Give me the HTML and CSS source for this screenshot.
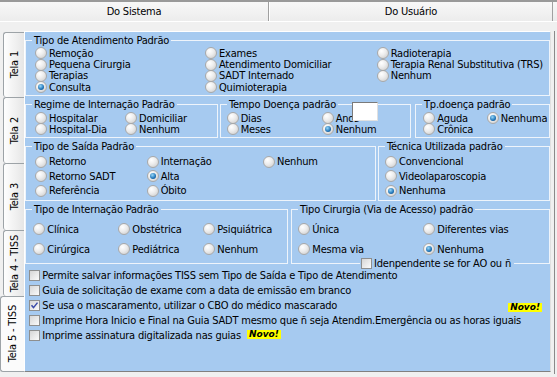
FILE: index.html
```html
<!DOCTYPE html>
<html lang="pt-BR">

<head>
  <meta charset="UTF-8">
  <title>Configurações Padrão</title>
  <link rel="stylesheet" href="styles.css">
</head>

<body>
  <div class="top-tabs">
    <div class="top-tab">Do Sistema</div>
    <div class="top-tab">Do Usuário</div>
  </div>

  <div class="main">
    <div class="side-tabs">
      <div class="side-tab tab1"><span>Tela 1</span></div>
      <div class="side-tab tab2"><span>Tela 2</span></div>
      <div class="side-tab tab3"><span>Tela 3</span></div>
      <div class="side-tab tab4"><span>Tela 4 - TISS</span></div>
      <div class="side-tab tab5 active"><span>Tela 5 - TISS</span></div>
    </div>

    <div class="panel">
      <fieldset class="group g-atend">
        <legend>Tipo de Atendimento Padrão</legend>
        <div class="opts">
          <span class="opt"><i class="radio"></i>Remoção</span>
          <span class="opt"><i class="radio"></i>Exames</span>
          <span class="opt"><i class="radio"></i>Radioterapia</span>
          <span class="opt"><i class="radio"></i>Pequena Cirurgia</span>
          <span class="opt"><i class="radio"></i>Atendimento Domiciliar</span>
          <span class="opt"><i class="radio"></i>Terapia Renal Substitutiva (TRS)</span>
          <span class="opt"><i class="radio"></i>Terapias</span>
          <span class="opt"><i class="radio"></i>SADT Internado</span>
          <span class="opt"><i class="radio"></i>Nenhum</span>
          <span class="opt"><i class="radio on"></i>Consulta</span>
          <span class="opt"><i class="radio"></i>Quimioterapia</span>
        </div>
      </fieldset>

      <div class="row r2">
        <fieldset class="group g-regime">
          <legend>Regime de Internação Padrão</legend>
          <div class="opts">
            <span class="opt"><i class="radio"></i>Hospitalar</span>
            <span class="opt"><i class="radio"></i>Domiciliar</span>
            <span class="opt"><i class="radio"></i>Hospital-Dia</span>
            <span class="opt"><i class="radio"></i>Nenhum</span>
          </div>
        </fieldset>
        <fieldset class="group g-tempo">
          <legend>Tempo Doença padrão</legend>
          <div class="opts">
            <span class="opt"><i class="radio"></i>Dias</span>
            <span class="opt"><i class="radio"></i>Anos</span>
            <span class="opt"><i class="radio"></i>Meses</span>
            <span class="opt"><i class="radio on"></i>Nenhum</span>
          </div>
          <div class="edit-box"></div>
        </fieldset>
        <fieldset class="group g-tpdoenca">
          <legend>Tp.doença padrão</legend>
          <div class="opts">
            <span class="opt"><i class="radio"></i>Aguda</span>
            <span class="opt"><i class="radio on"></i>Nenhuma</span>
            <span class="opt"><i class="radio"></i>Crônica</span>
          </div>
        </fieldset>
      </div>

      <div class="row r3">
        <fieldset class="group g-saida">
          <legend>Tipo de Saída Padrão</legend>
          <div class="opts">
            <span class="opt"><i class="radio"></i>Retorno</span>
            <span class="opt"><i class="radio"></i>Internação</span>
            <span class="opt"><i class="radio"></i>Nenhum</span>
            <span class="opt"><i class="radio"></i>Retorno SADT</span>
            <span class="opt"><i class="radio on"></i>Alta</span>
            <span></span>
            <span class="opt"><i class="radio"></i>Referência</span>
            <span class="opt"><i class="radio"></i>Óbito</span>
          </div>
        </fieldset>
        <fieldset class="group g-tecnica">
          <legend>Técnica Utilizada padrão</legend>
          <div class="opts">
            <span class="opt"><i class="radio"></i>Convencional</span>
            <span class="opt"><i class="radio"></i>Videolaparoscopia</span>
            <span class="opt"><i class="radio on"></i>Nenhuma</span>
          </div>
        </fieldset>
      </div>

      <div class="row r4">
        <fieldset class="group g-intern">
          <legend>Tipo de Internação Padrão</legend>
          <div class="opts">
            <span class="opt"><i class="radio"></i>Clínica</span>
            <span class="opt"><i class="radio"></i>Obstétrica</span>
            <span class="opt"><i class="radio"></i>Psiquiátrica</span>
            <span class="opt"><i class="radio"></i>Cirúrgica</span>
            <span class="opt"><i class="radio"></i>Pediátrica</span>
            <span class="opt"><i class="radio"></i>Nenhum</span>
          </div>
        </fieldset>
        <fieldset class="group g-cirurgia">
          <legend>Tipo Cirurgia (Via de Acesso) padrão</legend>
          <div class="opts">
            <span class="opt"><i class="radio"></i>Única</span>
            <span class="opt"><i class="radio"></i>Diferentes vias</span>
            <span class="opt"><i class="radio"></i>Mesma via</span>
            <span class="opt"><i class="radio on"></i>Nenhuma</span>
          </div>
          <span class="chk border-chk"><i class="box"></i>Idenpendente se for AO ou ñ</span>
        </fieldset>
      </div>

      <div class="checks">
        <span class="chk"><i class="box"></i>Permite salvar informações TISS sem Tipo de Saída e Tipo de Atendimento</span>
        <span class="chk"><i class="box"></i>Guia de solicitação de exame com a data de emissão em branco</span>
        <span class="chk"><i class="box"><svg viewBox="0 0 9 9"><path d="M1.5 4.2l2 2.4 4-5" fill="none" stroke="#3a4aa8" stroke-width="1.5"/></svg></i>Se usa o mascaramento, utilizar o CBO do médico mascarado<span class="novo novo-far">Novo!</span></span>
        <span class="chk"><i class="box"></i>Imprime Hora Inicio e Final na Guia SADT mesmo que ñ seja Atendim.Emergência ou as horas iguais</span>
        <span class="chk"><i class="box"></i>Imprime assinatura digitalizada nas guias<span class="novo novo-near">Novo!</span></span>
      </div>
    </div>

    <div class="edge"></div>
  </div>
</body>

</html>
```

FILE: styles.css
```css
body {
  margin: 0;
  width: 557px;
  height: 377px;
  overflow: hidden;
  background: #f0f0f0;
  font-family: "DejaVu Sans Condensed", "DejaVu Sans", sans-serif;
  font-size: 11px;
  letter-spacing: -0.2px;
  color: #000;
}

/* top tabs */
.top-tabs {
  display: flex;
  height: 22px;
  box-sizing: border-box;
  border-top: 2px solid #9a9a9a;
  border-bottom: 1px solid #fff;
  background: linear-gradient(#f8f8f8, #ececec);
}

.top-tab {
  display: flex;
  align-items: center;
  justify-content: center;
  width: 268px;
  border-right: 1px solid #a0a0a0;
}

.top-tab + .top-tab {
  width: 282px;
  border-left: 1px solid #fff;
}

/* vertical tabs */
.main {
  display: flex;
  height: 355px;
}

.side-tabs {
  width: 24px;
  padding-top: 10px;
  box-sizing: border-box;
  display: flex;
  flex-direction: column;
}

.side-tab {
  margin-left: 3px;
  display: flex;
  align-items: center;
  justify-content: center;
  box-sizing: border-box;
  border: 1px solid #9da3a7;
  border-right: none;
  border-bottom: none;
  border-radius: 3px 0 0 3px;
  background: linear-gradient(to right, #fefefe, #e6e6e6);
}

.side-tab span {
  writing-mode: vertical-rl;
  transform: rotate(180deg);
  white-space: nowrap;
}

.tab1 { height: 65px; }
.tab2 { height: 66px; }
.tab3 { height: 67px; }
.tab4 { height: 66px; }
.tab5 { height: 76px; }

.side-tab.active {
  margin-left: 0;
  background: #fbfbfb;
  border-bottom: 1px solid #9da3a7;
}

/* blue panel */
.panel {
  margin-top: 9px;
  width: 527px;
  height: 341px;
  box-sizing: border-box;
  border: 1px solid;
  border-color: #fff #e0e0e0 #808080 #fff;
  background: #a6caf0;
  display: flex;
  flex-direction: column;
}

.edge {
  margin-top: 9px;
  width: 3px;
  height: 343px;
  border-right: 1px solid #8a8a8a;
}

.row {
  display: flex;
  justify-content: space-between;
}

.group {
  position: relative;
  margin: 0;
  padding: 0;
  min-width: 0;
  box-sizing: border-box;
  border: 1px solid #eef4fb;
}

.group legend {
  margin-left: 6px;
  padding: 0 2px;
  line-height: 12px;
}

.opts {
  display: grid;
}

.opt {
  display: flex;
  align-items: center;
  gap: 2px;
  line-height: 11px;
  white-space: nowrap;
}

.radio {
  flex: none;
  position: relative;
  width: 12px;
  height: 12px;
  box-sizing: border-box;
  border-radius: 50%;
  border: 1px solid #a9a9a9;
  background: radial-gradient(circle at 35% 30%, #fff 0, #ececec 45%, #c8c8c8 100%);
}

.radio.on::after {
  content: "";
  position: absolute;
  left: 2px;
  top: 2px;
  width: 6px;
  height: 6px;
  border-radius: 50%;
  background: radial-gradient(circle at 40% 35%, #9ad8f8, #1f74b8 60%, #0c3d70);
}

/* group sizes */
.g-atend {
  margin-top: 2.5px;
  height: 61.5px;
}

.g-atend .opts {
  grid-template-columns: 170px 171.7px 1fr;
  grid-auto-rows: 11.33px;
  padding: 1.1px 0 0 9px;
}

.r2 {
  margin-top: 2.5px;
  height: 39.5px;
}

.r2 .opts {
  grid-auto-rows: 11px;
  padding-top: 2.3px;
}

.g-regime { width: 193px; }
.g-regime .opts { grid-template-columns: 90px 1fr; padding-left: 9px; }

.g-tempo { width: 191px; margin-left: 2px; }
.g-tempo .opts { grid-template-columns: 95px 1fr; padding-left: 5.7px; }

.g-tpdoenca { width: 135px; margin-left: 4px; }
.g-tpdoenca .opts { grid-template-columns: 63.4px 1fr; padding-left: 7.3px; }

.edit-box {
  position: absolute;
  left: 131px;
  top: -9px;
  width: 26px;
  height: 19px;
  box-sizing: border-box;
  background: #fff;
  border: 1px solid;
  border-color: #7a7a7a #e0e0e0 #e0e0e0 #7a7a7a;
}

.r3 {
  margin-top: 2.7px;
  height: 60.3px;
}

.r3 .opts {
  grid-auto-rows: 14.6px;
  padding-top: 1.7px;
}

.g-saida { width: 351px; }
.g-saida .opts { grid-template-columns: 111.7px 116.3px 1fr; padding-left: 9px; }

.g-tecnica { width: 172px; }
.g-tecnica .opts { padding-left: 6px; }

.r4 {
  margin-top: 3px;
  height: 60px;
}

.r4 .opts {
  grid-auto-rows: 20px;
  padding-top: 3.3px;
}

.g-intern { width: 263px; }
.g-intern .opts { grid-template-columns: 85px 85px 1fr; padding-left: 7.3px; }

.g-cirurgia { width: 259px; }
.g-cirurgia .opts { grid-template-columns: 125px 1fr; padding-left: 6.3px; }

/* checkboxes */
.chk {
  display: flex;
  align-items: center;
  line-height: 13px;
  white-space: nowrap;
}

.box {
  flex: none;
  width: 11px;
  height: 11px;
  margin-right: 2px;
  box-sizing: border-box;
  border: 1px solid #8e8f8f;
  background: linear-gradient(135deg, #d6d6d6, #fbfbfb);
}

.box svg {
  display: block;
  width: 9px;
  height: 9px;
}

.border-chk {
  position: absolute;
  left: 68px;
  bottom: -7px;
  height: 13px;
  padding: 0 3px 0 1px;
  background: #a6caf0;
}

.checks {
  margin-top: 4.2px;
  padding-left: 4.3px;
  display: grid;
  grid-auto-rows: 15px;
}

.novo {
  padding: 0 2px;
  background: #ffff00;
  font-family: "DejaVu Sans", sans-serif;
  font-size: 9px;
  font-weight: bold;
  font-style: italic;
  letter-spacing: 0;
  line-height: 9px;
}

.novo-far {
  margin-left: auto;
  margin-right: 8px;
  margin-top: 4px;
}

.novo-near {
  margin-left: 6px;
  margin-top: -2px;
}
```
